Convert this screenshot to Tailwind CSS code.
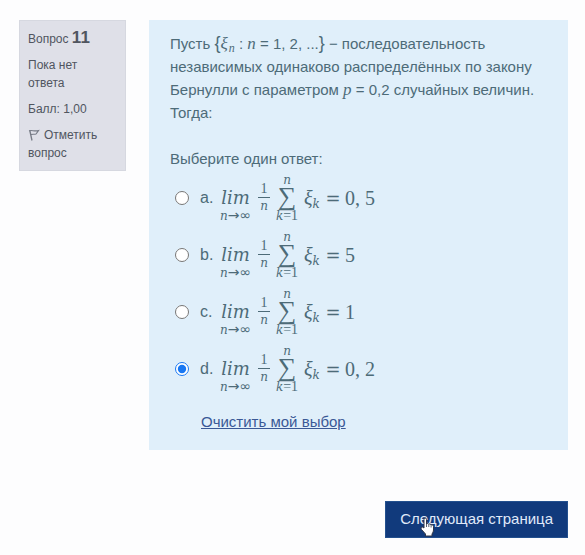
<!DOCTYPE html>
<html lang="ru">
<head>
<meta charset="utf-8">
<meta name="viewport" content="width=device-width, initial-scale=1">
<title>Вопрос 11</title>
<script src="https://cdn.jsdelivr.net/npm/@tailwindcss/browser@4"></script>
</head>
<body class="bg-[#fdfdfe] font-['Liberation_Sans',Arial,sans-serif] text-[#4d6b78]">
<form class="pt-5 pb-4 pl-[19px] pr-[17px]">
  <div class="flex items-start gap-[23px]">
    <aside class="w-[107px] shrink-0 border border-[#d6d8e0] bg-[#dfe0e8] px-2 pt-1 pb-2 text-[12px] leading-[18px] text-[#50555f]">
      <h3 class="mb-1 leading-[26px]">Вопрос <span class="text-[17px] font-bold">11</span></h3>
      <p class="mb-2 pr-6">Пока нет ответа</p>
      <p class="mb-2">Балл: 1,00</p>
      <a href="#flag" class="block"><svg class="mr-1 inline-block h-3 w-3 align-[-2px]" viewBox="0 0 12 12" fill="none" stroke="#777b86" aria-hidden="true"><path d="M1.8 1.5L4 11.5" stroke-width="1.3"/><path d="M1 1.8C4 .8 6 2.6 10.5 1.6L8 5C6 5.6 5 4.8 3 5.6" stroke-width="1.1"/></svg>Отметить вопрос</a>
    </aside>
    <main class="min-w-0 flex-1 bg-[#e0effa] px-[21px] pt-3 pb-[17px] text-[15px] leading-[23px]">
      <p>Пусть <span class="text-[18px] leading-4">{</span><i class="font-['Liberation_Serif',serif] text-[17px] leading-4">ξ<sub class="ml-px text-[12px]">n</sub></i> : <i class="font-['Liberation_Serif',serif] text-[17px] leading-4">n</i> = 1, 2, ...<span class="text-[18px] leading-4">}</span> − последовательность независимых одинаково распределённых по закону Бернулли с параметром <i class="font-['Liberation_Serif',serif] text-[17px] leading-4">p</i> = 0,2 случайных величин. Тогда:</p>
      <fieldset class="mt-[23px]">
        <legend>Выберите один ответ:</legend>
        <div id="answers" class="-mt-px"></div>
      </fieldset>
      <a href="#clear" class="mt-[13px] ml-[31px] inline-block text-[#3a5896] underline">Очистить мой выбор</a>
    </main>
  </div>
  <div class="mt-[51px] flex justify-end">
    <div class="relative">
      <button type="button" class="h-[37px] border border-[#23508e] bg-[#113a7c] px-[14px] text-[15px] text-[#e0eafa]">Следующая страница</button>
      <svg class="pointer-events-none absolute top-[16px] left-[35px] h-[20px] w-[15px]" viewBox="0 0 15 20" aria-hidden="true"><path d="M4 11V2.5Q4 1 5.2 1T6.5 2.5V7Q7.5 6 8.7 7.2Q10 6.3 11 7.7Q13.3 7 13.5 9.5V13Q13.5 15 12 17V19H5.5V17L1.5 12.5Q.5 11 1.6 10.2Q2.5 9.7 4 11Z" fill="#fff" stroke="#303747"/><path d="M6.5 7V10M8.8 7.5V10M11.1 8V10.5" stroke="#596273" fill="none"/></svg>
    </div>
  </div>
</form>
<template id="answer">
  <label class="flex h-[57px] items-center">
    <input type="radio" name="answer" class="ml-[5px] h-[14px] w-[14px] shrink-0 accent-[#1877f2]">
    <span class="ml-[11px] w-[17px] text-[16px]" data-letter></span>
    <span class="flex items-center font-['Liberation_Serif',serif] text-[20px] leading-6">
      <span class="grid w-[37px] grid-rows-[10px_24px_10px] justify-items-center font-['DejaVu_Serif',serif] italic">
        <span class="row-start-2 text-[18px]">lim</span>
        <span class="row-start-3 text-[12px] leading-[10px] whitespace-nowrap">n<span class="font-['DejaVu_Sans',sans-serif] text-[14px] not-italic">→∞</span></span>
      </span>
      <span class="ml-1 flex w-3 flex-col text-center text-[14px] leading-[14px]">
        <span class="border-b border-current pb-px">1</span>
        <i class="pt-px font-['DejaVu_Serif',serif] text-[12px]">n</i>
      </span>
      <span class="ml-1 grid w-[26px] grid-rows-[12px_24px_14px] justify-items-center">
        <i class="font-['DejaVu_Serif',serif] text-[12px] leading-[14px]">n</i>
        <span class="text-[26px] leading-[24px]">∑</span>
        <span class="text-[14px] leading-[14px] whitespace-nowrap"><i class="font-['DejaVu_Serif',serif] text-[12px]">k</i>=1</span>
      </span>
      <span class="ml-1 w-[17px] whitespace-nowrap italic">ξ<sub class="font-['DejaVu_Serif',serif] text-[12px]">k</sub></span>
      <span class="ml-[2px] w-5 text-center font-['DejaVu_Sans',sans-serif] text-[18px]">=</span>
      <span class="ml-[2px]" data-value></span>
    </span>
  </label>
</template>
<script>
const list = document.getElementById('answers');
const template = document.getElementById('answer');
[['a', '0, 5'], ['b', '5'], ['c', '1'], ['d', '0, 2']].forEach(([letter, value]) => {
  const row = template.content.cloneNode(true);
  row.querySelector('[data-letter]').textContent = letter + '.';
  row.querySelector('[data-value]').textContent = value;
  const input = row.querySelector('input');
  input.value = letter;
  input.checked = letter === 'd';
  list.append(row);
});
</script>
</body>
</html>
